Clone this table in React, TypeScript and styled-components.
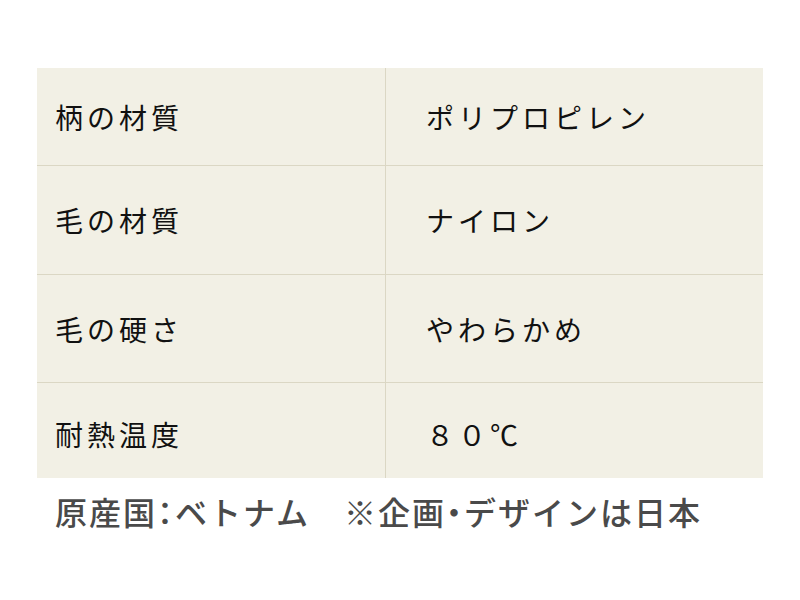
import styled, { createGlobalStyle } from "styled-components";

const GlobalStyle = createGlobalStyle`
    html, body {
        margin: 0;
        padding: 0;
        background: #fff;
    }
    body {
        font-family: "Noto Sans CJK JP", "Noto Sans", sans-serif;
    }
`;

const specs = [
    { label: "柄の材質", value: "ポリプロピレン", height: 98 },
    { label: "毛の材質", value: "ナイロン", height: 109 },
    { label: "毛の硬さ", value: "やわらかめ", height: 108 },
    { label: "耐熱温度", value: "８０℃", height: 95 },
];

const Page = styled.div`
    width: 800px;
    height: 600px;
    padding: 68px 37px 0;
    box-sizing: border-box;
`;

const Table = styled.div`
    display: grid;
    grid-template-columns: 349px 377px;
    background: #f2f0e5;
`;

const Cell = styled.div<{ $h: number; $last: boolean; $value?: boolean }>`
    height: ${(p) => p.$h}px;
    box-sizing: border-box;
    display: flex;
    align-items: center;
    padding-left: ${(p) => (p.$value ? 40 : 18)}px;
    padding-top: ${(p) => (p.$last ? 6 : 0)}px;
    border-bottom: ${(p) => (p.$last ? "none" : "1px solid #dbd7c4")};
    border-right: ${(p) => (p.$value ? "none" : "1px solid #dbd7c4")};
    font-size: 28px;
    letter-spacing: 4px;
    color: #111;
`;

const Note = styled.div`
    margin-top: 10px;
    padding-left: 18px;
    font-size: 32px;
    font-weight: 500;
    letter-spacing: 2px;
    color: #4a4a4a;
    white-space: pre;
`;

const Punct = styled.span`
    font-feature-settings: "halt";
`;

export default function App() {
    return (
        <Page>
            <GlobalStyle />
            <Table>
                {specs.map((s, i) => {
                    const last = i === specs.length - 1;
                    return [
                        <Cell key={s.label} $h={s.height} $last={last}>
                            {s.label}
                        </Cell>,
                        <Cell key={s.value} $h={s.height} $last={last} $value>
                            {s.value}
                        </Cell>,
                    ];
                })}
            </Table>
            <Note>
                原産国<Punct>：</Punct>ベトナム　※企画<Punct>・</Punct>デザインは日本
            </Note>
        </Page>
    );
}
